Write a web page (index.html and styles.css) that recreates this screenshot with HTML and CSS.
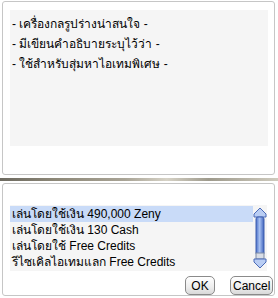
FILE: index.html
```html
<!DOCTYPE html>
<html lang="th">
<head>
    <meta charset="UTF-8">
    <meta name="viewport" content="width=device-width, initial-scale=1.0">
    <title>ไอเทม</title>
    <link rel="stylesheet" href="styles.css">
</head>
<body>

<div class="window">
    <div class="panel panel-top">
        <div class="desc">
            <p>- เครื่องกลรูปร่างน่าสนใจ -</p>
            <p>- มีเขียนคำอธิบายระบุไว้ว่า -</p>
            <p>- ใช้สำหรับสุ่มหาไอเทมพิเศษ -</p>
        </div>
    </div>

    <div class="divider"></div>

    <div class="panel panel-bottom">
        <div class="list">
            <ul class="options">
                <li class="selected">เล่นโดยใช้เงิน 490,000 Zeny</li>
                <li>เล่นโดยใช้เงิน 130 Cash</li>
                <li>เล่นโดยใช้ Free Credits</li>
                <li>รีไซเคิลไอเทมแลก Free Credits</li>
            </ul>
            <div class="scrollbar">
                <svg width="14" height="62" viewBox="0 0 14 62">
                    <defs>
                        <linearGradient id="thumb" x1="0" x2="1" y1="0" y2="0">
                            <stop offset="0" stop-color="#4a6fc8"/>
                            <stop offset="0.45" stop-color="#a9c2f2"/>
                            <stop offset="1" stop-color="#3f63bd"/>
                        </linearGradient>
                    </defs>
                    <path d="M7 1 L13 7 L13 10 L1 10 L1 7 Z" fill="#b9cdf3" stroke="#4a6ab8"/>
                    <rect x="3" y="10" width="8" height="38" rx="2" fill="url(#thumb)" stroke="#3f5fae"/>
                    <rect x="3" y="46" width="8" height="6" fill="#d8dde6" stroke="#7d8aa3"/>
                    <path d="M1 52 L13 52 L13 55 L7 61 L1 55 Z" fill="#b9cdf3" stroke="#4a6ab8"/>
                </svg>
            </div>
        </div>
        <div class="buttons">
            <button class="btn btn-ok">OK</button>
            <button class="btn btn-cancel">Cancel</button>
        </div>
    </div>
</div>

</body>
</html>
```

FILE: styles.css
```css
body {
    margin: 0;
    padding: 0;
    background-color: #fff;
    font-family: Tahoma, "Liberation Sans", "DejaVu Sans", sans-serif;
    font-size: 12px;
    color: #000;
}
.window {
    width: 278px;
    height: 298px;
    display: flex;
    flex-direction: column;
}
.panel {
    margin: 0 3px 0 2px;
    border: 1px solid #c6c6c6;
    border-radius: 3px;
    background-color: #fff;
}
.panel-top {
    margin-top: 1px;
    height: 174px;
    padding: 8px 6px 0 7px;
    box-sizing: border-box;
}
.desc {
    background-color: #f5f5f5;
    height: 136px;
    padding: 4px 0 0 2px;
    box-sizing: border-box;
}
.desc p {
    margin: 0;
    line-height: 20px;
    white-space: nowrap;
}
.divider {
    height: 3px;
    margin: 3px 0 2px 0;
    background: linear-gradient(to right, #6d6a60 0%, #8d8878 20%, #a9a496 45%, #d6d2c6 60%, #9e9a8c 75%, #cfcbbe 100%);
}
.panel-bottom {
    flex: 1;
    margin-bottom: 2px;
    padding: 21px 7px 0 7px;
    display: flex;
    flex-direction: column;
}
.list {
    background-color: #f5f5f5;
    height: 66px;
    display: flex;
}
.options {
    list-style: none;
    margin: 0;
    padding: 1px 0 0 0;
    flex: 1;
}
.options li {
    height: 16px;
    line-height: 16px;
    padding-left: 2px;
    white-space: nowrap;
}
.options li.selected {
    background-color: #c9dbf8;
}
.scrollbar {
    width: 14px;
    padding: 2px 0 0 0;
}
.scrollbar svg {
    display: block;
}
.buttons {
    display: flex;
    justify-content: flex-end;
    gap: 15px;
    margin-top: 5px;
    margin-right: -6px;
}
.btn {
    height: 19px;
    padding: 0 2px;
    border: 1px solid #8a8a8a;
    border-radius: 5px;
    background: linear-gradient(#ffffff, #ededed 60%, #d9d9d9);
    font-family: Tahoma, "Liberation Sans", sans-serif;
    font-size: 12px;
    color: #000;
}
.btn-ok {
    width: 30px;
}
.btn-cancel {
    width: 43px;
}
```
